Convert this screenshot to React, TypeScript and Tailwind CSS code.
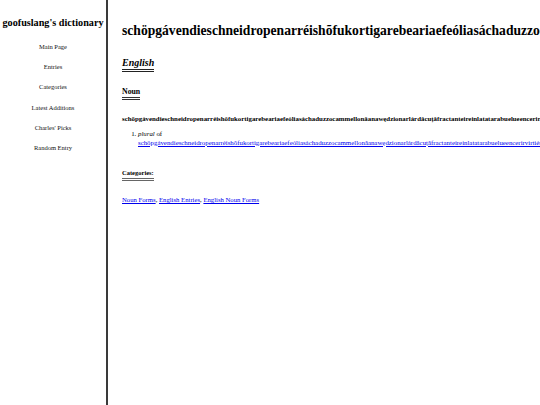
import React from 'react';

const word =
  'schöpgávendieschneidropenarréishõfukortigarebeariaefeóliasáchaduzzocammellonăanawędzionarlárdăcuțăfractanteireinlatatarabuelueencerirvirtiéndoselo';

const navItems = ['Main Page', 'Entries', 'Categories', 'Latest Additions', "Charles' Picks", 'Random Entry'];

export default function App() {
  return (
    <div className="flex h-[405px] w-[540px] overflow-hidden bg-white text-black font-['Liberation_Serif',serif]">
      {/* Sidebar */}
      <aside className="w-[108px] shrink-0 border-r-2 border-[#3a3a3a] text-center">
        <h1 className="mt-[17px] text-[10.2px] font-bold leading-[12px] whitespace-nowrap">goofuslang's dictionary</h1>
        <nav className="mt-[8px] flex flex-col">
          {navItems.map((item) => (
            <a key={item} className="text-[6.5px] leading-[20.2px] text-[#111]">
              {item}
            </a>
          ))}
        </nav>
      </aside>

      {/* Main */}
      <main className="min-w-0 flex-1 pl-[14px] pt-[23px] whitespace-nowrap">
        <h1 className="text-[13.6px] font-bold leading-[16px]">{word}s</h1>

        <h2 className="mt-[18px] inline-block border-b-[3px] border-double border-[#222] pb-[1px] text-[10px] font-bold italic leading-[11px]">
          English
        </h2>

        <div>
          <h3 className="mt-[14px] inline-block border-b-[3px] border-double border-[#333] pb-[1px] text-[7.8px] font-bold leading-[9px]">
            Noun
          </h3>
        </div>

        <p className="mt-[14px] text-[6.85px] font-bold leading-[8px]">{word}s</p>

        <ol className="mt-[7px] list-decimal pl-[16px] text-[6.85px] leading-[8.5px]">
          <li>
            <i>plural</i> of
            <br />
            <a className="text-[#0000ee] underline">{word}</a>
          </li>
        </ol>

        <div>
          <h4 className="mt-[22px] inline-block border-b-[3px] border-double border-[#666] pb-[1px] text-[6.5px] font-bold leading-[8px]">
            Categories:
          </h4>
        </div>

        <p className="mt-[14px] text-[6.7px] leading-[8px]">
          <a className="text-[#0000ee] underline">Noun Forms</a>, <a className="text-[#0000ee] underline">English Entries</a>,{' '}
          <a className="text-[#0000ee] underline">English Noun Forms</a>
        </p>
      </main>
    </div>
  );
}
